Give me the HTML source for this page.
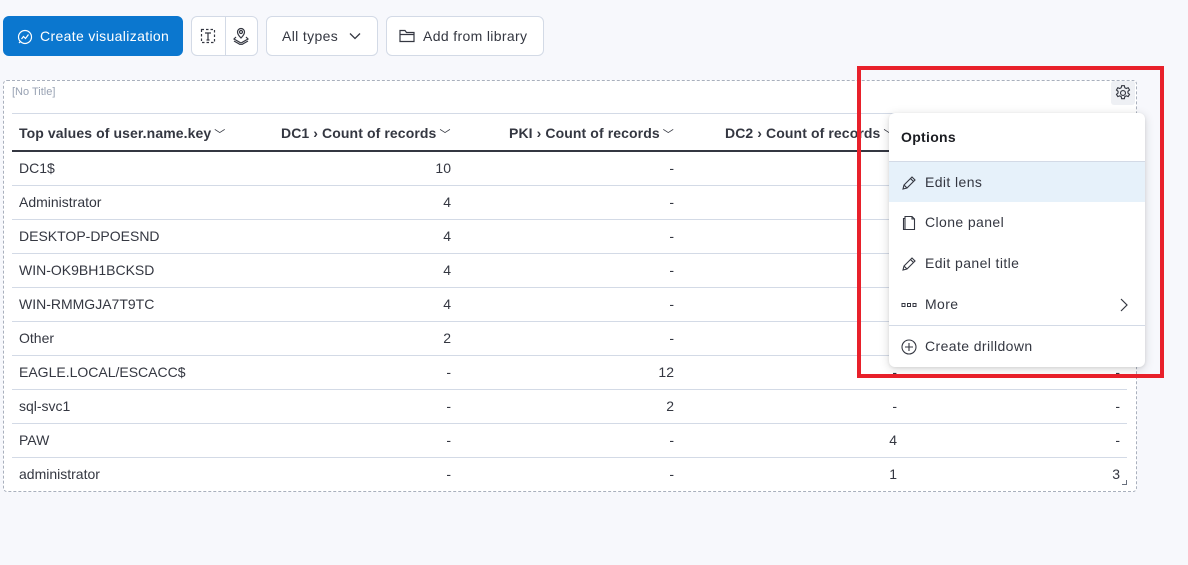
<!DOCTYPE html>
<html><head><meta charset="utf-8"><style>
*{box-sizing:border-box;margin:0;padding:0}
body{width:1188px;height:565px;background:#f7f8fc;font-family:"Liberation Sans",sans-serif;position:relative;overflow:hidden;color:#343741}
.abs{position:absolute}
.btn{position:absolute;top:16px;height:40px;border:1px solid #d3dae6;border-radius:6px;background:#fff;font-size:14px;color:#343741;display:flex;align-items:center;letter-spacing:.35px}
.panel{position:absolute;left:3px;top:80px;width:1134px;height:412px;border:1px dashed #a9b0bd;border-radius:4px;background:#fff}
.row{position:absolute;left:12px;width:1115px;height:34px;border-bottom:1px solid #d3dae6;font-size:14px;line-height:33px}
.c{position:absolute;top:0}
.n{position:absolute;top:0;text-align:right;width:100px}
.hd{position:absolute;top:115px;font-size:14px;font-weight:bold;color:#343741;line-height:36px;letter-spacing:.1px}
.hd i{font-style:normal;font-weight:normal;font-size:11px;margin-left:3px}
.menu{position:absolute;left:889px;top:113px;width:256px;height:254px;background:#fff;border-radius:6px;box-shadow:0 2px 10px rgba(0,0,0,.15),0 1px 3px rgba(0,0,0,.08)}
.mi{position:absolute;left:0;width:256px;height:41px;font-size:14px;line-height:41px;padding-left:36px;color:#343741;letter-spacing:.4px}
.mi svg{position:absolute;left:12px;top:13px}
</style></head><body>
<div class="btn" style="left:3px;width:180px;background:#0b77cf;border-color:#0b77cf;color:#fff;font-size:14px">
<svg class="abs" style="left:13px;top:12px" width="16" height="16" viewBox="0 0 16 16" fill="none" stroke="#fff" stroke-width="1.2"><circle cx="8" cy="8" r="6.5"/><path d="M4.5 10l2-2.5 2 2 3-4"/><path d="M2 14l2-2"/></svg>
<span style="position:absolute;left:36px">Create visualization</span></div>
<div class="btn" style="left:191px;width:67px">
<div class="abs" style="left:33px;top:0;width:1px;height:38px;background:#d3dae6"></div>
<svg class="abs" style="left:8px;top:11px" width="16" height="16" viewBox="0 0 16 16" fill="none" stroke="#343741" stroke-width="1.2"><rect x="1.5" y="1.5" width="13" height="13" stroke-dasharray="2.5 2"/><path d="M5 5h6M8 5v7M6.5 12h3"/></svg>
<svg class="abs" style="left:41px;top:10px" width="16" height="18" viewBox="0 0 16 18" fill="none" stroke="#343741" stroke-width="1.2"><circle cx="8" cy="5" r="1.5"/><path d="M8 11C5 8 4.5 6.5 4.5 5a3.5 3.5 0 017 0c0 1.5-.5 3-3.5 6z"/><path d="M3 10l-2 2 7 4 7-4-2-2M1 14l7 4 7-4"/></svg>
</div>
<div class="btn" style="left:266px;width:112px"><span style="position:absolute;left:15px">All types</span>
<svg class="abs" style="left:82px;top:15px" width="12" height="8" viewBox="0 0 12 8" fill="none" stroke="#343741" stroke-width="1.3"><path d="M1 1.5l5 5 5-5"/></svg></div>
<div class="btn" style="left:386px;width:158px">
<svg class="abs" style="left:12px;top:12px" width="16" height="14" viewBox="0 0 16 14" fill="none" stroke="#343741" stroke-width="1.2"><path d="M1 1.5h5l1.5 2H15v9H1z M1 5.5h14"/></svg>
<span style="position:absolute;left:36px">Add from library</span></div>

<div class="panel"></div>
<div class="abs" style="left:12px;top:86px;font-size:11px;color:#98a2b3">[No Title]</div>
<div class="abs" style="left:12px;top:113px;width:1115px;height:1px;background:#d3dae6"></div>
<div class="hd" style="left:19px">Top values of user.name.key<i>﹀</i></div>
<div class="hd" style="left:281px">DC1 › Count of records<i>﹀</i></div>
<div class="hd" style="left:509px">PKI › Count of records<i>﹀</i></div>
<div class="hd" style="left:725px">DC2 › Count of records<i>﹀</i></div>
<div class="abs" style="left:12px;top:150px;width:1115px;height:2px;background:#343741"></div>

<div class="row" style="top:152px"><span class="c" style="left:7px">DC1$</span><span class="n" style="left:339px">10</span><span class="n" style="left:562px">-</span></div>
<div class="row" style="top:186px"><span class="c" style="left:7px">Administrator</span><span class="n" style="left:339px">4</span><span class="n" style="left:562px">-</span></div>
<div class="row" style="top:220px"><span class="c" style="left:7px">DESKTOP-DPOESND</span><span class="n" style="left:339px">4</span><span class="n" style="left:562px">-</span></div>
<div class="row" style="top:254px"><span class="c" style="left:7px">WIN-OK9BH1BCKSD</span><span class="n" style="left:339px">4</span><span class="n" style="left:562px">-</span></div>
<div class="row" style="top:288px"><span class="c" style="left:7px">WIN-RMMGJA7T9TC</span><span class="n" style="left:339px">4</span><span class="n" style="left:562px">-</span></div>
<div class="row" style="top:322px"><span class="c" style="left:7px">Other</span><span class="n" style="left:339px">2</span><span class="n" style="left:562px">-</span></div>
<div class="row" style="top:356px"><span class="c" style="left:7px">EAGLE.LOCAL/ESCACC$</span><span class="n" style="left:339px">-</span><span class="n" style="left:562px">12</span><span class="n" style="left:785px">-</span><span class="n" style="left:1008px">-</span></div>
<div class="row" style="top:390px"><span class="c" style="left:7px">sql-svc1</span><span class="n" style="left:339px">-</span><span class="n" style="left:562px">2</span><span class="n" style="left:785px">-</span><span class="n" style="left:1008px">-</span></div>
<div class="row" style="top:424px"><span class="c" style="left:7px">PAW</span><span class="n" style="left:339px">-</span><span class="n" style="left:562px">-</span><span class="n" style="left:785px">4</span><span class="n" style="left:1008px">-</span></div>
<div class="row" style="top:458px;border-bottom:none"><span class="c" style="left:7px">administrator</span><span class="n" style="left:339px">-</span><span class="n" style="left:562px">-</span><span class="n" style="left:785px">1</span><span class="n" style="left:1008px">3</span></div>
<div class="abs" style="left:1122px;top:480px;width:5px;height:5px;border-right:1px solid #69707d;border-bottom:1px solid #69707d"></div>

<div class="abs" style="left:1111px;top:81px;width:24px;height:24px;background:#eef0f4;border-radius:3px"></div>
<svg class="abs" style="left:1114px;top:84px" width="18" height="18" viewBox="0 0 16 16" fill="none" stroke="#343741" stroke-width="1"><circle cx="8" cy="8" r="2.2"/><path d="M6.8 1.5h2.4l.4 1.8 1.3.7 1.7-.7 1.2 2-1.4 1.2v1.5l1.4 1.2-1.2 2-1.7-.7-1.3.7-.4 1.8H6.8l-.4-1.8-1.3-.7-1.7.7-1.2-2 1.4-1.2V6.5L2.2 5.3l1.2-2 1.7.7 1.3-.7z"/></svg>

<div class="menu">
<div class="abs" style="left:12px;top:16px;font-size:14px;font-weight:bold;color:#1a1c21;letter-spacing:.3px">Options</div>
<div class="abs" style="left:0;top:48px;width:256px;height:1px;background:#d3dae6"></div>
<div class="mi" style="top:49px;height:40px;line-height:40px;background:#e6f1fa"><svg width="16" height="16" viewBox="0 0 16 16" fill="none" stroke="#343741" stroke-width="1.1"><path d="M2 14l1-4 8-8 3 3-8 8z M3 10l3 3 M9.5 3.5l3 3"/></svg>Edit lens</div>
<div class="mi" style="top:89px"><svg width="16" height="16" viewBox="0 0 16 16" fill="none" stroke="#343741" stroke-width="1.1"><path d="M4 1.5h7l2.5 2.5v10.5H4z M4 3.5H2.5v11h2 M11 1.5V4h2.5"/></svg>Clone panel</div>
<div class="mi" style="top:130px"><svg width="16" height="16" viewBox="0 0 16 16" fill="none" stroke="#343741" stroke-width="1.1"><path d="M2 14l1-4 8-8 3 3-8 8z M3 10l3 3 M9.5 3.5l3 3"/></svg>Edit panel title</div>
<div class="mi" style="top:171px"><svg width="16" height="16" viewBox="0 0 16 16" fill="none" stroke="#343741" stroke-width="1"><rect x="1" y="6.5" width="3" height="3"/><rect x="6.5" y="6.5" width="3" height="3"/><rect x="12" y="6.5" width="3" height="3"/></svg>More
<svg style="left:231px;top:14px" width="8" height="14" viewBox="0 0 8 14" fill="none" stroke="#343741" stroke-width="1.2"><path d="M1 1l6 6-6 6"/></svg></div>
<div class="abs" style="left:0;top:212px;width:256px;height:1px;background:#d3dae6"></div>
<div class="mi" style="top:213px"><svg width="16" height="16" viewBox="0 0 16 16" fill="none" stroke="#343741" stroke-width="1.1"><circle cx="8" cy="8" r="7"/><path d="M8 4v8M4 8h8"/></svg>Create drilldown</div>
</div>

<div class="abs" style="left:857px;top:66px;width:307px;height:312px;border:4px solid #e8202a"></div>
</body></html>
